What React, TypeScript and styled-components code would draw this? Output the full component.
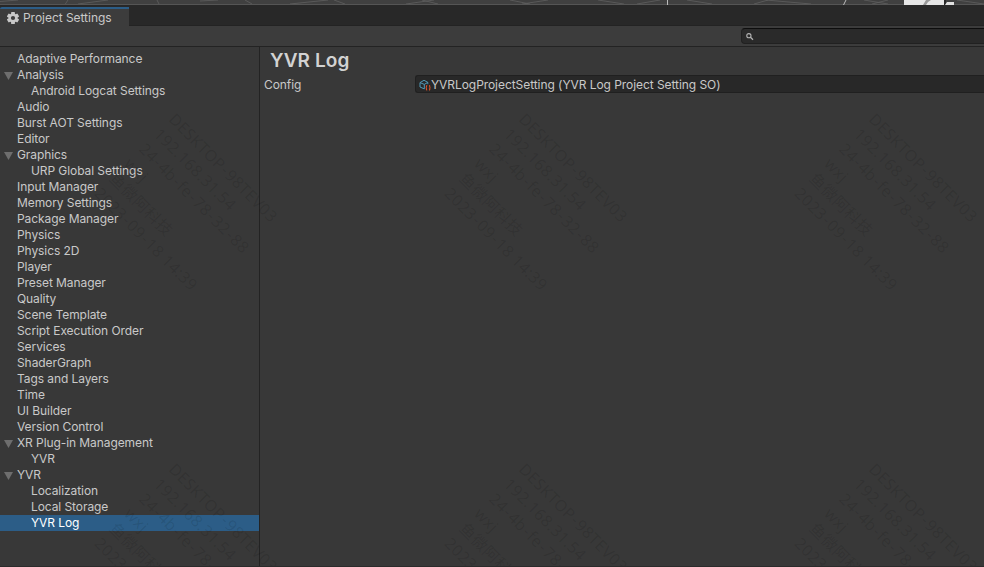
import React from 'react';
import styled, { createGlobalStyle } from 'styled-components';

const Global = createGlobalStyle`
  * { box-sizing: border-box; }
  body { margin: 0; overflow: hidden; background: #383838; }
`;

const Window = styled.div`
  position: relative;
  display: flex;
  flex-direction: column;
  width: 984px;
  height: 567px;
  overflow: hidden;
  background: #383838;
  border-bottom: 1px solid #2b2b2b;
  color: #c9c9c9;
  font: 12px/16px Inter, 'Liberation Sans', sans-serif;
  letter-spacing: -0.08px;
  white-space: nowrap;
`;

const SceneStrip = styled.svg`
  display: block;
  flex: none;
  width: 984px;
  height: 5px;
  background: #404040;
`;

const TabBar = styled.div`
  display: flex;
  flex: none;
  height: 21px;
  padding-top: 2px;
  background: #282828;
`;

const Tab = styled.div`
  display: flex;
  align-items: center;
  width: 129px;
  height: 19px;
  padding: 1px 0 0 6px;
  gap: 3px;
  background: #3c3c3c;
  border-top: 2px solid #2c5d87;
  border-top-left-radius: 2px;
  letter-spacing: -0.04px;
`;

const TabFill = styled.div`
  flex: 1;
  border-bottom: 1px solid #232323;
`;

const Toolbar = styled.div`
  display: flex;
  justify-content: flex-end;
  flex: none;
  height: 21px;
  padding-top: 2px;
  background: #3c3c3c;
  border-bottom: 1px solid #232323;
`;

const SearchField = styled.div`
  width: 243px;
  height: 16px;
  padding: 4px 0 0 4px;
  background: #2a2a2a;
  border: 1px solid #212121;
  border-top-color: #0d0d0d;
  border-right: 0;
  border-radius: 4px 0 0 4px;
  svg { display: block; }
`;

const Body = styled.div`
  display: flex;
  flex: 1;
  min-height: 0;
`;

const Sidebar = styled.div`
  width: 260px;
  padding-top: 4px;
  border-right: 1px solid #232323;
`;

const TreeRow = styled.div<{ $child?: boolean; $selected?: boolean }>`
  display: flex;
  align-items: center;
  height: 16px;
  padding-left: ${p => (p.$child ? 18 : 4)}px;
  background: ${p => (p.$selected ? '#2c5d87' : 'transparent')};
  color: ${p => (p.$selected ? '#fff' : 'inherit')};
`;

const Arrow = styled.svg`
  flex: none;
  width: 13px;
  height: 10px;
`;

const Content = styled.div`
  flex: 1;
  padding-left: 4px;
`;

const Title = styled.h1`
  margin: 0;
  padding: 1px 0 0 6px;
  height: 28px;
  font-size: 19px;
  line-height: 26px;
  font-weight: 600;
  letter-spacing: 0.1px;
  color: #d2d2d2;
`;

const Property = styled.div`
  display: flex;
  align-items: center;
  height: 18px;
`;

const PropertyLabel = styled.div`
  width: 151px;
  padding-top: 2px;
`;

const ObjectField = styled.div`
  display: flex;
  align-items: center;
  flex: 1;
  height: 18px;
  padding: 1px 0 0 3px;
  background: #282828;
  border: 1px solid #202020;
  border-right: 0;
  border-radius: 3px 0 0 3px;
  letter-spacing: -0.06px;
`;

const Watermark = styled.div<{ $x: number; $y: number }>`
  position: absolute;
  left: ${p => p.$x}px;
  top: ${p => p.$y}px;
  transform: rotate(45deg);
  transform-origin: 0 0;
  color: rgba(0, 0, 0, 0.1);
  font: 16px/21px 'Noto Sans', 'Noto Sans CJK SC', sans-serif;
  letter-spacing: 0.3px;
  pointer-events: none;
`;

const Dash = styled.span`
  margin: 0 1px;
`;

const items: { label: string; child?: boolean; open?: boolean; selected?: boolean }[] = [
  { label: 'Adaptive Performance' },
  { label: 'Analysis', open: true },
  { label: 'Android Logcat Settings', child: true },
  { label: 'Audio' },
  { label: 'Burst AOT Settings' },
  { label: 'Editor' },
  { label: 'Graphics', open: true },
  { label: 'URP Global Settings', child: true },
  { label: 'Input Manager' },
  { label: 'Memory Settings' },
  { label: 'Package Manager' },
  { label: 'Physics' },
  { label: 'Physics 2D' },
  { label: 'Player' },
  { label: 'Preset Manager' },
  { label: 'Quality' },
  { label: 'Scene Template' },
  { label: 'Script Execution Order' },
  { label: 'Services' },
  { label: 'ShaderGraph' },
  { label: 'Tags and Layers' },
  { label: 'Time' },
  { label: 'UI Builder' },
  { label: 'Version Control' },
  { label: 'XR Plug-in Management', open: true },
  { label: 'YVR', child: true },
  { label: 'YVR', open: true },
  { label: 'Localization', child: true },
  { label: 'Local Storage', child: true },
  { label: 'YVR Log', child: true, selected: true },
];

const marks = [0, 1].flatMap(r => [0, 1, 2].map(c => ({ x: 178.5 + c * 350, y: 109 + r * 350 })));
const markLines = ['DESKTOP-98TEV03', '192.168.31.54', '24-4b-fe-78-32-88', 'wxj', '鱼微阿科技', '2023-09-18 14:39'];

const MarkLine = ({ text }: { text: string }) => (
  <div>
    {text.split('-').map((part, i) => (
      <React.Fragment key={i}>
        {i > 0 && <Dash>-</Dash>}
        {part}
      </React.Fragment>
    ))}
  </div>
);

const Gear = () => (
  <svg width="14" height="14" viewBox="0 0 14 14">
    <g fill="#c8c8c8">
      {[0, 60, 120].map(a => (
        <rect key={a} x="5.1" y="0.9" width="3.8" height="12.2" rx="0.7" transform={`rotate(${a} 7 7)`} />
      ))}
    </g>
    <circle cx="7" cy="7" r="3.3" fill="#3c3c3c" stroke="#c8c8c8" strokeWidth="2.4" />
  </svg>
);

const Magnifier = () => (
  <svg width="9" height="8" viewBox="0 0 9 8" fill="none" stroke="#b4b4b4">
    <circle cx="2.9" cy="2.7" r="2.1" strokeWidth="1.1" />
    <path d="M4.500 4.3 7 6.8" strokeWidth="1.3" />
  </svg>
);

const AssetIcon = () => (
  <svg width="12" height="12" viewBox="0 0 12 12" fill="none">
    <path d="M5.3 9.9 1 8V3.6L5 1.3l3.8 2v1.9M1 3.6l4.3 1.8 3.5-2M5.3 5.4v4.5" stroke="#519ab9" strokeWidth="1" />
    <path d="M8.2 6.5c-1 0-.7.7-.7 1.3s-.2.8-.7.9c.5.1.7.4.7 1s-.3 1.3.7 1.3M10 6.5c1 0 .7.7.7 1.3s.2.8.7.9c-.5.1-.7.4-.7 1s.3 1.3-.7 1.3" stroke="#d9532c" strokeWidth="1.1" />
  </svg>
);

export default function App() {
  return (
    <>
      <Global />
      <Window>
        <SceneStrip viewBox="0 0 984 5">
          <g stroke="#606060" strokeWidth="0.8" fill="none">
            <path d="M0 1.5 18 0M65 4.5 68 0M78 4 108 0M157 0l2 4M200 1l18-1M245 0l7 4M290 4 328 0M334 0l11 4M406 4 434 0M422 0l16 4M510 0l20 4M522 4 548 0M598 0l26 4M637 4 660 0M687 0l25 4M754 4 768 0M766 0l45 4M864 0l24 4M872 4l16-4M957 0l27 4" />
          </g>
          <path d="M0 4.5H984" stroke="#555" />
          <path d="M667.5 0V5" stroke="#bbb" />
          <path d="M846 0 843.500 5" stroke="#bbb" />
          <path d="M904 0h40v5h-40z" fill="#e6e6e6" />
          <path d="M926 0h5l-3 2-2 3h-3z" fill="#999" />
          <path d="M944 0h2v5h-2z" fill="#282828" />
          <path d="M947 2h7v3h-9z" fill="#e0e0e0" />
        </SceneStrip>
        <TabBar>
          <Tab><Gear /><span>Project Settings</span></Tab>
          <TabFill />
        </TabBar>
        <Toolbar>
          <SearchField><Magnifier /></SearchField>
        </Toolbar>
        <Body>
          <Sidebar>
            {items.map((it, i) => (
              <TreeRow key={i} $child={it.child} $selected={it.selected}>
                <Arrow viewBox="0 0 13 10">
                  {it.open && <path d="M0 2h9L4.500 10z" fill="#6e6e6e" />}
                </Arrow>
                <span>{it.label}</span>
              </TreeRow>
            ))}
          </Sidebar>
          <Content>
            <Title>YVR Log</Title>
            <Property>
              <PropertyLabel>Config</PropertyLabel>
              <ObjectField>
                <AssetIcon />
                <span>YVRLogProjectSetting (YVR Log Project Setting SO)</span>
              </ObjectField>
            </Property>
          </Content>
        </Body>
        {marks.map((m, i) => (
          <Watermark key={i} $x={m.x} $y={m.y}>
            {markLines.map(l => <MarkLine key={l} text={l} />)}
          </Watermark>
        ))}
      </Window>
    </>
  );
}
